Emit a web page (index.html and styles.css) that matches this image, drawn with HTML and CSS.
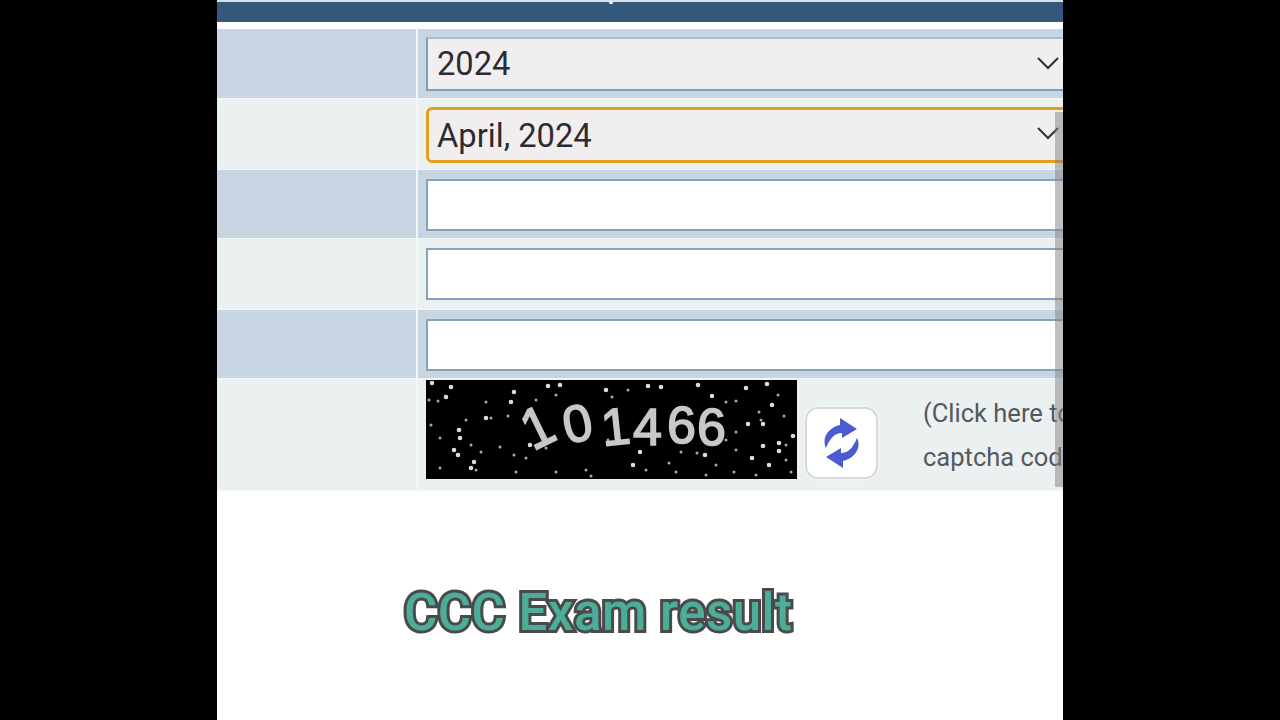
FILE: index.html
```html
<!DOCTYPE html>
<html lang="en">
<head>
    <meta charset="UTF-8">
    <meta name="viewport" content="width=device-width, initial-scale=1.0">
    <title>CCC Exam result</title>
    <link rel="stylesheet" href="styles.css">
</head>
<body>
    <div class="page">
        <div class="top-line"></div>
        <div class="header-bar"><span class="header-dot"></span></div>

        <form class="result-form">
            <div class="row row-blue row-a">
                <div class="label-cell"></div>
                <div class="field-cell">
                    <div class="select-wrap">
                        <select class="field field-select">
                            <option>2024</option>
                        </select>
                        <svg class="chevron" viewBox="0 0 22 13"><path d="M1 1l10 10L21 1"/></svg>
                    </div>
                </div>
            </div>
            <div class="row row-light row-b">
                <div class="label-cell"></div>
                <div class="field-cell">
                    <div class="select-wrap">
                        <select class="field field-select field-focus">
                            <option>April, 2024</option>
                        </select>
                        <svg class="chevron" viewBox="0 0 22 13"><path d="M1 1l10 10L21 1"/></svg>
                    </div>
                </div>
            </div>
            <div class="row row-blue row-c">
                <div class="label-cell"></div>
                <div class="field-cell"><input class="field field-input" type="text"></div>
            </div>
            <div class="row row-light row-d">
                <div class="label-cell"></div>
                <div class="field-cell"><input class="field field-input" type="text"></div>
            </div>
            <div class="row row-blue row-c">
                <div class="label-cell"></div>
                <div class="field-cell"><input class="field field-input" type="text"></div>
            </div>
            <div class="row row-light row-captcha">
                <div class="label-cell"></div>
                <div class="field-cell captcha-cell">
                    <svg class="captcha" viewBox="0 0 371 99">
                        <rect width="371" height="99" fill="#000"/>
                        <g class="captcha-ink">
                            <path class="dots-big" d="M25 7h0M20 17h0M122 6h0M88 12h0M180 10h0M222 6h0M235 7h0M272 5h0M320 8h0M286 16h0M341 4h0M346 25h0M322 44h0M337 44h0M367 56h0M337 66h0M353 63h0M353 71h0M326 78h0M343 85h0M28 70h0M32 75h0M104 65h0M214 72h0M279 75h0M207 85h0M45 88h0M48 82h0M134 5h0M85 22h0M60 38h0M33 50h0M34 58h0M6 3h0"/>
                            <path class="dots-small" d="M12 21h0M40 40h0M60 22h0M65 38h0M82 36h0M110 20h0M130 15h0M186 17h0M202 10h0M300 22h0M310 21h0M352 15h0M333 32h0M335 40h0M358 36h0M310 52h0M300 60h0M360 65h0M271 73h0M290 85h0M255 72h0M243 83h0M220 90h0M165 96h0M160 90h0M130 92h0M88 75h0M120 68h0M100 78h0M74 67h0M55 72h0M45 65h0M14 58h0M5 45h0M14 88h0M50 90h0M90 92h0M250 92h0M308 92h0M330 95h0M280 95h0M360 80h0M365 92h0M3 20h0M182 60h0M195 62h0M310 70h0"/>
                            <g class="captcha-digits">
                                <text transform="translate(107 71) rotate(-26) scale(1 1.1)">1</text>
                                <text transform="translate(141 64) rotate(-12)">0</text>
                                <text transform="translate(177 66) rotate(-6)">1</text>
                                <text x="207" y="65">4</text>
                                <text x="241" y="63">6</text>
                                <text x="271" y="65">6</text>
                            </g>
                        </g>
                    </svg>
                    <button class="refresh-btn" type="button">
                        <svg class="refresh-icon" viewBox="0 0 37 50">
                            <path d="M3 30C-2 20 6 9 17 7L17 0 34 11 19 20 19 15C12 15 7 20 3 30z"/>
                            <path d="M34 20C39 30 31 41 20 43L20 50 3 39 18 30 18 35C25 35 30 30 34 20z"/>
                        </svg>
                    </button>
                    <div class="captcha-note">(Click here to<br>captcha code</div>
                </div>
            </div>
            <div class="scrollbar"></div>
        </form>

        <div class="caption">CCC Exam result</div>
    </div>
</body>
</html>
```

FILE: styles.css
```css
* {
    box-sizing: border-box;
}

html, body {
    margin: 0;
    height: 100%;
    background: #000;
    overflow: hidden;
}

.page {
    width: 846px;
    height: 720px;
    margin: 0 auto;
    background: #fff;
    font-family: 'Roboto', 'Liberation Sans', sans-serif;
    overflow: hidden;
    position: relative;
}

.top-line {
    height: 2px;
    background: #d9dfe2;
}

.header-bar {
    height: 20px;
    background: #34587b;
    position: relative;
}

.header-dot {
    position: absolute;
    left: 392px;
    top: -1px;
    width: 4px;
    height: 3px;
    border-radius: 2px;
    background: #e8edf1;
}

.result-form {
    margin-top: 7px;
    position: relative;
}

.row {
    display: flex;
}

.row-blue { background: #c8d5e3; }
.row-light { background: #ebf0f1; }

.row-a { height: 70px; padding-top: 8px; }
.row-b { height: 71px; padding-top: 8px; }
.row-c { height: 69px; padding-top: 9px; }
.row-d { height: 71px; padding-top: 9px; }
.row-captcha { height: 112px; padding-top: 1px; }

.row-a, .row-b, .row-c, .row-d, .row-captcha {
    border-bottom: 1px solid #f4f7f8;
}

.label-cell {
    width: 201px;
    flex-shrink: 0;
    margin-top: -10px;
    border-right: 2px solid #f4f7f8;
}

.field-cell {
    padding-left: 8px;
    flex: 1;
    min-width: 0;
}

.select-wrap {
    position: relative;
    width: 660px;
}

.field {
    display: block;
    width: 660px;
    font-family: inherit;
    font-size: 32.7px;
    color: #2c2c30;
    outline: none;
}

.field-select {
    appearance: none;
    -webkit-appearance: none;
    height: 54px;
    padding: 0 9px 1px;
    background: #f1eef0;
    border: 2px solid #7e9cbc;
    border-top-color: #a3bfd8;
    border-radius: 0;
}

.field-focus {
    height: 56px;
    padding: 1px 8px 0;
    border: 3px solid #dfa11f;
    border-radius: 6px;
    box-shadow: 0 0 2px #fff3c4;
}

.field-input {
    height: 52px;
    background: #fff;
    border: 2px solid #86a2bf;
    box-shadow: 0 0 1px #cfe2f2;
}

.chevron {
    position: absolute;
    left: 611px;
    top: 20px;
    width: 22px;
    height: 13px;
    fill: none;
    stroke: #333;
    stroke-width: 2;
}

.captcha-cell {
    display: flex;
    align-items: flex-start;
}

.captcha {
    width: 371px;
    height: 99px;
    flex-shrink: 0;
}

.captcha-ink {
    filter: blur(0.5px);
}

.dots-big {
    stroke: #dcdcdc;
    stroke-width: 4.6;
    stroke-linecap: round;
}

.dots-small {
    stroke: #a8a8a8;
    stroke-width: 3;
    stroke-linecap: round;
}

.captcha-digits {
    font-family: 'Liberation Sans', sans-serif;
    font-size: 52px;
    fill: #c8c8c8;
    stroke: #c8c8c8;
    stroke-width: 1.6;
}

.refresh-btn {
    width: 73px;
    height: 72px;
    margin: 27px 0 0 8px;
    padding: 0;
    flex-shrink: 0;
    display: flex;
    align-items: center;
    justify-content: center;
    background: #fff;
    border: 2px solid #d8d8d8;
    border-radius: 13px;
    box-shadow: 0 0 3px #fff;
}

.refresh-icon {
    width: 37px;
    height: 50px;
    fill: #4a5ccf;
    filter: blur(0.5px);
}

.captcha-note {
    margin: 11px 0 0 45px;
    font-size: 25.5px;
    line-height: 44px;
    color: #55595c;
    white-space: nowrap;
}

.scrollbar {
    position: absolute;
    right: 0;
    top: 83px;
    bottom: 4px;
    width: 8px;
    background: rgba(130, 130, 130, 0.5);
}

.caption {
    margin: 92px 0 0 187px;
    font-size: 51px;
    line-height: 60px;
    font-weight: 500;
    letter-spacing: 0.5px;
    color: #4cae9a;
    -webkit-text-stroke: 6px #4a4a4a;
    paint-order: stroke fill;
    white-space: nowrap;
}
```
